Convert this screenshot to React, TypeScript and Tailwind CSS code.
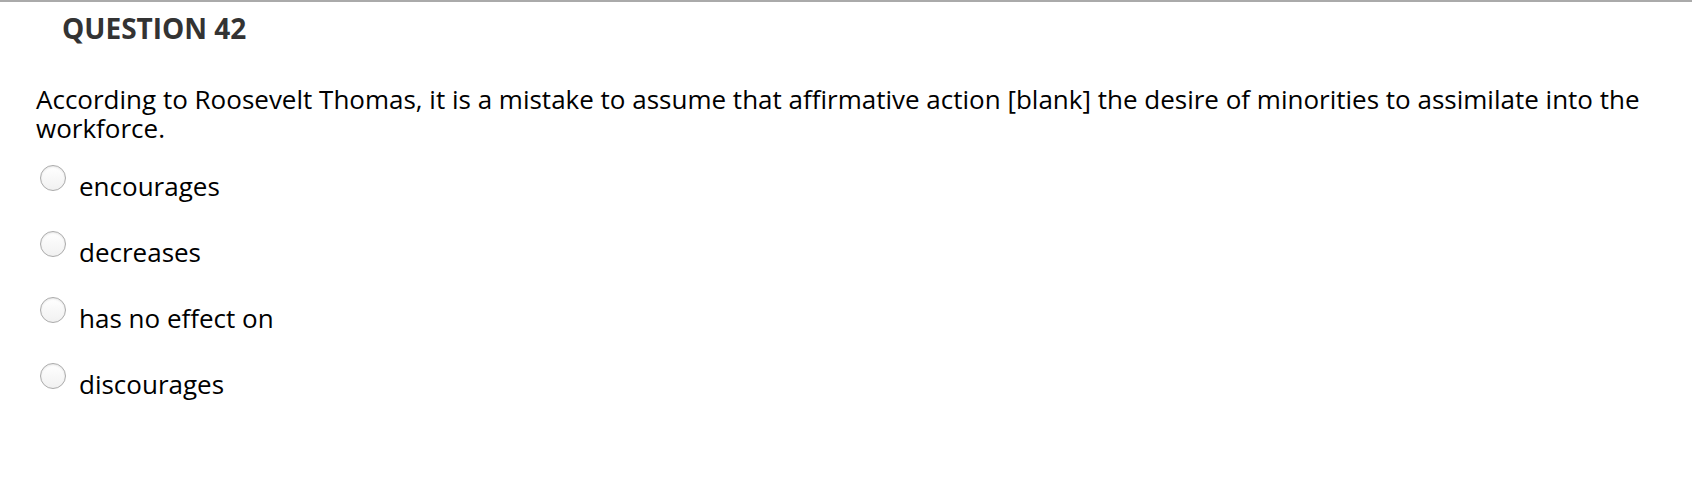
import React from "react";

const options = ["encourages", "decreases", "has no effect on", "discourages"];

function Radio() {
  return (
    <span className="block w-[26px] h-[26px] shrink-0 rounded-full border border-[#ababab] bg-gradient-to-b from-white to-[#f1f1f1] shadow-[inset_0_1px_2px_rgba(0,0,0,0.1)]" />
  );
}

export default function App() {
  return (
    <div
      className="w-[1692px] h-[480px] bg-white border-t-2 border-[#aaaaaa] text-black"
      style={{ fontFamily: '"Open Sans", "Noto Sans", sans-serif' }}
    >
      <h2 className="ml-[62px] mt-[8px] text-[28px] leading-[36px] font-bold text-[#333333]">
        QUESTION 42
      </h2>
      <div className="ml-[36px] mt-[39px] pr-[40px]">
        <p className="text-[26px] leading-[29px]">
          According to Roosevelt Thomas, it is a mistake to assume that affirmative action [blank] the desire of
          minorities to assimilate into the workforce.
        </p>
        <ul className="mt-[22px] flex flex-col gap-[30px]">
          {options.map((o) => (
            <li key={o} className="flex items-start pl-[4px] gap-[13px]">
              <Radio />
              <span className="mt-[7px] text-[26px] leading-[29px]">{o}</span>
            </li>
          ))}
        </ul>
      </div>
    </div>
  );
}
